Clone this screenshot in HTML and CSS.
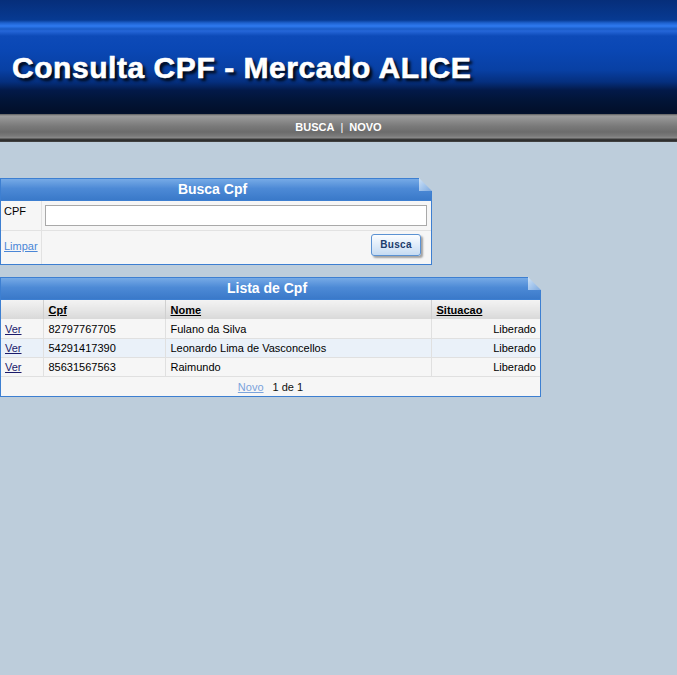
FILE: index.html
```html
<!DOCTYPE html>
<html lang="pt">
<head>
<meta charset="utf-8">
<title>Consulta CPF - Mercado ALICE</title>
<link rel="stylesheet" href="styles.css">
</head>
<body>
<header class="banner">
  <h1 class="banner-title">Consulta CPF - Mercado ALICE</h1>
</header>
<nav class="menu">
  <a href="#" class="menu-link">BUSCA</a>
  <span class="menu-sep">|</span>
  <a href="#" class="menu-link">NOVO</a>
</nav>
<main class="content">
  <section class="panel panel-search">
    <div class="panel-head">Busca Cpf<span class="fold"></span></div>
    <table class="form-table">
      <tr>
        <td class="form-label">CPF</td>
        <td class="form-field"><input type="text" class="text-input"></td>
      </tr>
      <tr>
        <td class="form-label form-label-link"><a href="#" class="light-link">Limpar</a></td>
        <td class="form-actions"><button class="btn">Busca</button></td>
      </tr>
    </table>
  </section>

  <section class="panel panel-list">
    <div class="panel-head">Lista de Cpf<span class="fold"></span></div>
    <table class="grid">
      <thead>
        <tr>
          <th class="col-ver"></th>
          <th class="col-cpf"><a href="#">Cpf</a></th>
          <th class="col-nome"><a href="#">Nome</a></th>
          <th class="col-sit"><a href="#">Situacao</a></th>
        </tr>
      </thead>
      <tbody>
        <tr>
          <td><a href="#" class="dark-link">Ver</a></td>
          <td>82797767705</td>
          <td>Fulano da Silva</td>
          <td class="right">Liberado</td>
        </tr>
        <tr class="alt">
          <td><a href="#" class="dark-link">Ver</a></td>
          <td>54291417390</td>
          <td>Leonardo Lima de Vasconcellos</td>
          <td class="right">Liberado</td>
        </tr>
        <tr>
          <td><a href="#" class="dark-link">Ver</a></td>
          <td>85631567563</td>
          <td>Raimundo</td>
          <td class="right">Liberado</td>
        </tr>
      </tbody>
      <tfoot>
        <tr>
          <td colspan="4" class="pager"><a href="#" class="light-link">Novo</a><span class="pager-count">1 de 1</span></td>
        </tr>
      </tfoot>
    </table>
  </section>
</main>
</body>
</html>
```

FILE: styles.css
```css
* { box-sizing: border-box; }
html, body {
  margin: 0;
  padding: 0;
  background: #bdcddb;
  font-family: "Liberation Sans", Arial, sans-serif;
  font-size: 11px;
  color: #000;
}
.banner {
  height: 114px;
  background: linear-gradient(to bottom,
    #062e7a 0px, #073a92 20px, #1e62d0 23px, #2f7af0 26px, #1a5cc8 29px,
    #2566d8 31px, #0d4ab8 36px, #0a47b4 50px, #0840a4 70px, #052f7e 82px,
    #031a4a 90px, #021538 100px, #020f2a 112px, #03122e 114px);
  overflow: hidden;
}
.banner-title {
  margin: 0;
  padding: 50px 0 0 12px;
  font-family: "Liberation Sans", Arial, sans-serif;
  font-weight: bold;
  font-size: 30px;
  line-height: 36px;
  color: #fff;
  -webkit-text-stroke: 0.6px #fff;
  text-shadow: 3px 3px 3px rgba(0,0,0,0.9);
  letter-spacing: 0.55px;
}
.menu {
  height: 28px;
  background: linear-gradient(to bottom,
    #5c5c5c 0px, #9c9c9c 2px, #8e8e8e 6px, #7a7a7a 12px, #6c6c6c 18px,
    #7a7a7a 22px, #8a8a8a 24px, #3a3a3a 25px, #2a2a2a 27px, #555 28px);
  display: flex;
  justify-content: center;
  align-items: flex-start;
  padding-top: 7px;
  gap: 6px;
  font-weight: bold;
  font-size: 11px;
  color: #fff;
}
.menu-link { color: #fff; text-decoration: none; }
.menu-sep { color: #fff; font-weight: normal; }

.content {
  padding-top: 36px;
  display: flex;
  flex-direction: column;
  align-items: flex-start;
  gap: 12px;
}
.panel {
  border: 1px solid #3d7fd1;
  border-top: none;
  background: #f6f6f6;
}
.panel-search { width: 432px; }
.panel-list { width: 541px; }
.panel-head {
  position: relative;
  height: 23px;
  background: linear-gradient(to bottom, #76aae6 0%, #4d8ad6 45%, #3a79c9 100%);
  border: 1px solid #3d7fd1;
  margin: 0 -1px;
  padding-right: 7px;
  color: #fff;
  font-weight: bold;
  font-size: 14px;
  line-height: 21px;
  text-align: center;
}
.fold {
  position: absolute;
  top: -1px;
  right: -1px;
  width: 13px;
  height: 13px;
  background: #bdcddb;
}
.fold::after {
  content: "";
  position: absolute;
  inset: 0;
  background: linear-gradient(to bottom right, #d2e4f6 0%, #a9c9ee 45%, #7ea9df 100%);
  clip-path: polygon(0 0, 100% 100%, 0 100%);
}
.form-table, .grid {
  width: 100%;
  border-collapse: collapse;
}
.form-table td {
  border: 1px solid #e2e2e2;
  vertical-align: top;
}
.form-table tr:first-child td { border-top: none; }
.form-table td:first-child { border-left: none; }
.form-table td:last-child { border-right: none; }
.form-table tr:last-child td { border-bottom: none; }
.form-label {
  width: 40px;
  padding: 4px 3px;
  height: 29px;
}
.form-label-link { padding-top: 9px; }
.form-field { padding: 4px 4px 3px 3px; }
.text-input {
  display: block;
  width: 100%;
  height: 21px;
  border: 1px solid #a9a9a9;
  background: #fff;
  margin: 0;
}
.form-actions {
  height: 34px;
  text-align: right;
  padding: 3px 10px 4px 0;
}
.btn {
  width: 50px;
  height: 22px;
  border: 1px solid #5b92d3;
  border-radius: 3px;
  background: linear-gradient(to bottom, #fbfdff 0%, #e3eefa 45%, #c6dbf2 100%);
  box-shadow: 2px 2px 2px rgba(0,0,0,0.35);
  font-family: "Liberation Sans", Arial, sans-serif;
  font-weight: bold;
  font-size: 10px;
  color: #1c3c6c;
  padding: 0;
  letter-spacing: 0.3px;
}
.light-link { color: #4a86d6; text-decoration: underline; }
.dark-link { color: #1a1a6a; text-decoration: underline; }

.grid th {
  height: 19px;
  background: linear-gradient(to bottom, #f3f3f3 0%, #e4e4e4 60%, #d9d9d9 100%);
  border-right: 1px solid #d0d0d0;
  text-align: left;
  padding: 0 4px 0 5px;
  font-weight: bold;
}
.grid th:last-child { border-right: none; }
.grid th a { color: #000; text-decoration: underline; }
.grid td {
  height: 19px;
  padding: 1px 4px 0 5px;
  border: 1px solid #e0e0e0;
  border-top: none;
  background: #f6f6f6;
}
.grid td:first-child { border-left: none; padding-left: 4px; }
.grid td:last-child { border-right: none; }
.grid tr.alt td { background: #eaf1f9; }
.col-ver { width: 42px; }
.col-cpf { width: 122px; }
.col-nome { width: 266px; }
.right { text-align: right; }
.grid tfoot td {
  text-align: center;
  border: none;
  height: 20px;
  background: #f6f6f6;
}
.pager .light-link { color: #7aa3dc; }
.pager-count { margin-left: 9px; color: #111; }
```
